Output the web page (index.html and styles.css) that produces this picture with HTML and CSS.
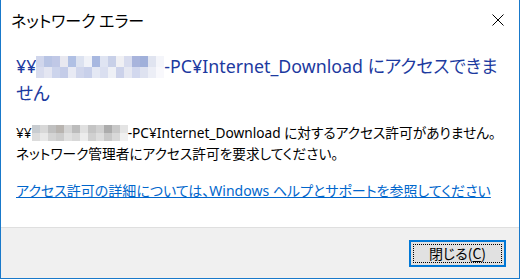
FILE: index.html
```html
<!DOCTYPE html>
<html lang="ja">
<head>
<meta charset="utf-8">
<title>ネットワーク エラー</title>
<link rel="stylesheet" href="styles.css">
</head>
<body>
<div class="window">
  <div class="titlebar">
    <span class="title">ネットワーク エラー</span>
    <span class="close" aria-label="閉じる">
      <svg width="12" height="12" viewBox="0 0 12 12"><path d="M0.5 0.5 L11.5 11.5 M11.5 0.5 L0.5 11.5" stroke="#000" stroke-width="1" fill="none"/></svg>
    </span>
  </div>
  <div class="content">
    <div class="instruction">
      <span class="line">¥¥<span class="blur blur-blue"></span>-PC¥Internet_Download にアクセスできま</span><br>
      <span class="line">せん</span>
    </div>
    <div class="message">
      <span class="line">¥¥<span class="blur blur-gray"></span>-PC¥Internet_Download に対するアクセス許可がありません。</span><br>
      <span class="line">ネットワーク管理者にアクセス許可を要求してください。</span>
    </div>
    <a class="help" href="#">アクセス許可の詳細については、Windows ヘルプとサポートを参照してください</a>
  </div>
  <div class="footer">
    <button class="btn"><span class="focus">閉じる(<u>C</u>)</span></button>
  </div>
</div>
</body>
</html>
```
FILE: styles.css
```css
html, body {
  margin: 0;
  padding: 0;
  background: #fff;
}
body {
  width: 520px;
  height: 279px;
  overflow: hidden;
  font-family: "Segoe UI", "Noto Sans", "Noto Sans CJK JP", sans-serif;
  font-feature-settings: "palt";
}
.window {
  box-sizing: border-box;
  width: 520px;
  height: 279px;
  border: 1px solid #1979ca;
  border-top: none;
  display: flex;
  flex-direction: column;
  background: #fff;
}
.titlebar {
  height: 40px;
  display: flex;
  align-items: center;
  justify-content: space-between;
  padding-left: 10px;
  padding-right: 15px;
}
.title {
  font-size: 16px;
  color: #000;
  font-family: "Noto Sans CJK JP", sans-serif;
  font-feature-settings: "palt";
}
.close {
  display: flex;
  width: 12px;
  height: 12px;
}
.content {
  flex: 1;
  padding: 13px 15px 0 15px;
}
.line {
  white-space: nowrap;
}
.instruction {
  color: #1c3aa0;
  font-size: 17.8px;
  line-height: 27px;
}
.message {
  margin-top: 15px;
  color: #000;
  font-size: 13.7px;
  line-height: 21px;
}
.help {
  display: inline-block;
  margin-top: 17px;
  color: #0066cc;
  font-size: 14px;
  line-height: 20px;
  text-decoration: underline;
}
.blur {
  display: inline-block;
  vertical-align: -5px;
}
.blur-blue {
  width: 128px;
  height: 22px;
  background:
    linear-gradient(90deg, #d0d6ec 0 8px, #b8c4e4 8px 16px, #c0c8e6 16px 24px, #e8e8f0 24px 32px, #b0c0e4 32px 40px, #dce2f0 40px 48px, #f0f2f8 48px 56px, #a8b8e0 56px 64px, #dfe4f2 64px 72px, #c8d0e8 72px 80px, #f0f0f4 80px 88px, #d8dcee 88px 96px, #a8b4dc 96px 104px, #a0b0da 104px 112px, #e0e4f0 112px 120px, #f4f5fa 120px 128px) 0 0 / 128px 11px no-repeat,
    linear-gradient(90deg, #d8dcee 0 8px, #e4e6f2 8px 16px, #ccd4ec 16px 24px, #c4cce8 24px 32px, #e8eaf4 32px 40px, #d0d6ec 40px 48px, #c8d0ea 48px 56px, #e4e8f4 56px 64px, #dadff0 64px 72px, #eef0f6 72px 80px, #ccd2ea 80px 88px, #e6e8f2 88px 96px, #d2d8ee 96px 104px, #dee2f0 104px 112px, #eceef6 112px 120px, #f8f8fc 120px 128px) 0 11px / 128px 11px no-repeat;
}
.blur-gray {
  width: 96px;
  height: 16px;
  vertical-align: -3px;
  background:
    linear-gradient(90deg, #c8ccd0 0 8px, #d8d8d8 8px 16px, #c0c0c0 16px 24px, #b8b4b0 24px 32px, #d4d4d4 32px 40px, #bcbcbc 40px 48px, #e0e0e0 48px 56px, #c4c4c4 56px 64px, #d0d0d0 64px 72px, #acacac 72px 80px, #c8c8c8 80px 88px, #e4e4e4 88px 96px) 0 0 / 96px 8px no-repeat,
    linear-gradient(90deg, #dcdcdc 0 8px, #e8e8e8 8px 16px, #d4d4d4 16px 24px, #cccccc 24px 32px, #e0e0e0 32px 40px, #d8d8d8 40px 48px, #ececec 48px 56px, #d0d0d0 56px 64px, #dddddd 64px 72px, #c8c8c8 72px 80px, #d8d8d8 80px 88px, #f0f0f0 88px 96px) 0 8px / 96px 8px no-repeat;
}
.footer {
  height: 50px;
  background: #f0f0f0;
  border-top: 1px solid #dfdfdf;
  display: flex;
  align-items: center;
  justify-content: flex-end;
  padding-right: 13px;
}
.btn {
  box-sizing: border-box;
  width: 97px;
  height: 27px;
  padding: 2px;
  margin: 0;
  border: 2px solid #0078d7;
  background: #e1e1e1;
  font-family: "Noto Sans CJK JP", sans-serif;
  font-feature-settings: "palt";
  font-size: 14px;
  color: #000;
  display: flex;
}
.focus {
  flex: 1;
  border: 1px dotted #000;
  display: flex;
  align-items: center;
  justify-content: center;
  line-height: 1;
}
.focus u {
  text-underline-offset: 2px;
}
```
